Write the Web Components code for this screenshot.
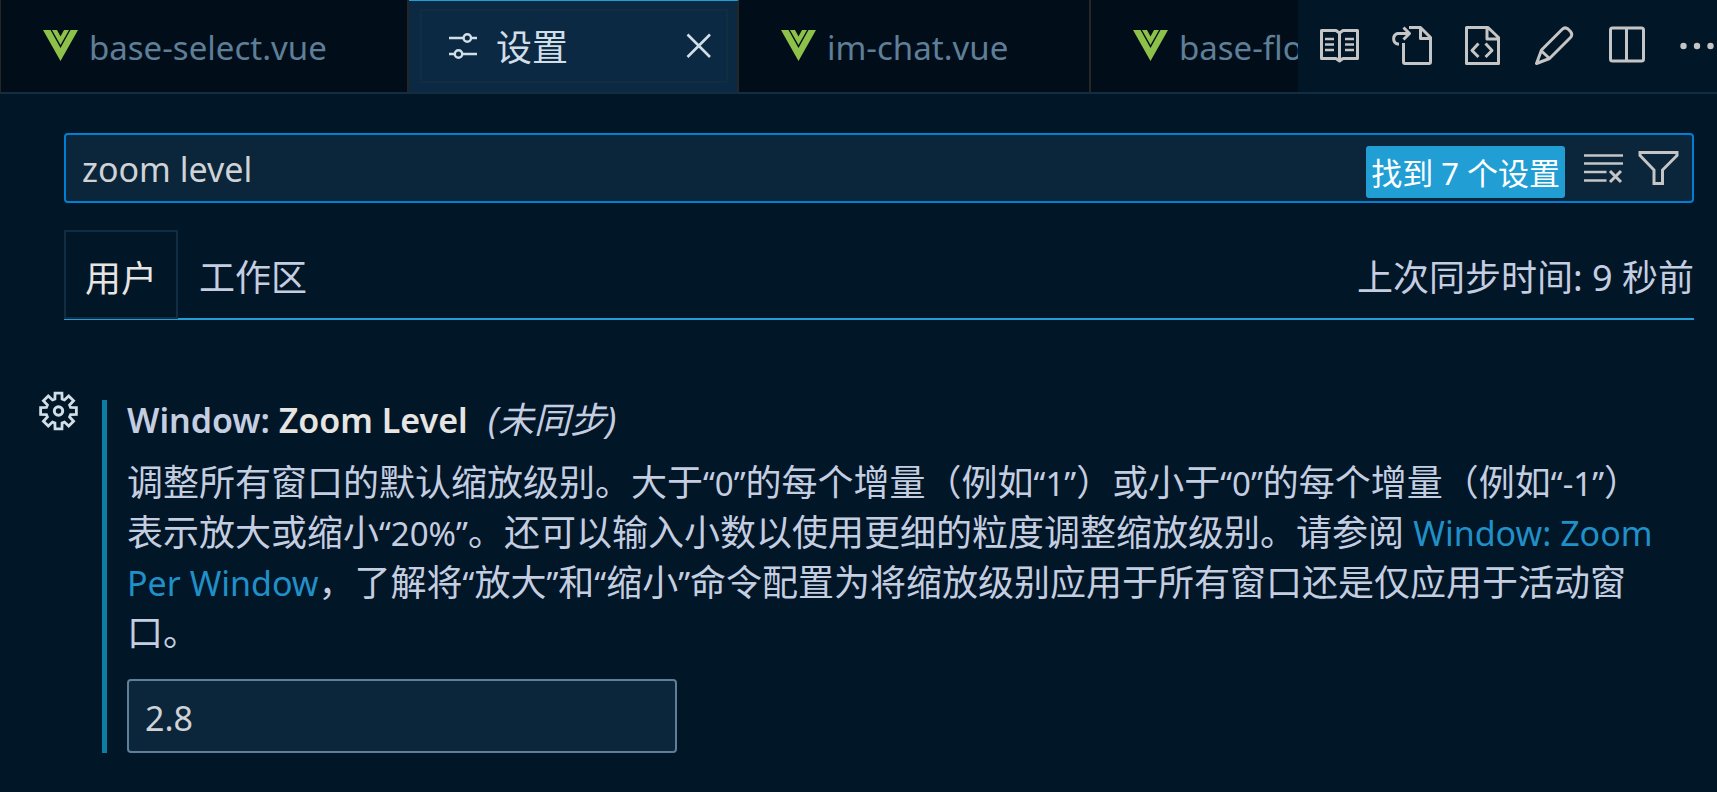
<!DOCTYPE html>
<html lang="zh-CN">
<head>
<meta charset="utf-8">
<title>设置</title>
<style>
  html { background: #011627; }
  body {
    margin: 0;
    background: #011627;
    color: #c5cee0;
    font-family: "Noto Sans", "Noto Sans CJK SC", sans-serif;
    font-size: 36px;
    --border: #122d42;
    --accent: #219fd5;
    --field: #0b253a;
    --size-latin: 34px;
    --size-cjk: 36px;
  }
</style>
</head>
<body>
<settings-window></settings-window>

<template id="t-icon">
  <style>
    :host { display: block; flex: none; width: 44px; height: 44px; }
    svg { display: block; width: 100%; height: 100%; overflow: visible; fill: none; stroke: currentColor; stroke-width: 3; stroke-linejoin: round; }
  </style>
</template>

<template id="t-tab">
  <style>
    :host { display: block; flex: none; box-sizing: border-box; width: 352px; height: 92px; border-right: 2px solid #262626; background: #010e1a; color: #5f7e97; }
    :host([first]) { width: 409px; border-left: 1px solid #262626; }
    :host([active]) { width: 330px; background: #0b2942; color: #d2dee7; border-top: 1px solid var(--accent); padding: 8px 9px 9px 11px; }
    .inner { display: flex; align-items: center; box-sizing: border-box; height: 100%; padding-left: 42px; }
    :host([active]) .inner { border: 2px solid var(--border); padding: 0 5px 0 26px; }
    button { all: unset; display: flex; align-items: center; flex: 1; gap: 10px; white-space: nowrap; font-size: 33px; line-height: 48px; padding-top: 4px; }
    :host([active]) button { font-size: var(--size-cjk); gap: 8px; padding-top: 0; }
    :host([active]) button span { padding-top: 4px; }
    :host([active]) .close { flex: none; display: block; }
    ui-icon.file { width: 36px; height: 36px; }
    :host([active]) ui-icon.file { width: 40px; height: 36px; }
  </style>
  <div class="inner"><button role="tab"><ui-icon class="file"></ui-icon><span><slot></slot></span></button></div>
</template>

<template id="t-tabbar">
  <style>
    :host { display: flex; border-bottom: 2px solid var(--border); height: 92px; }
    .tabs { display: flex; flex: 1; min-width: 0; overflow: hidden; }
    .actions { display: flex; flex: none; gap: 27px; padding: 24px 0 24px 20px; color: #c5c5c5; background: #011627; }
    button { all: unset; display: block; }
  </style>
  <div class="tabs" role="tablist">
    <file-tab icon="vue" first>base-select.vue</file-tab>
    <file-tab icon="sliders" active>设置</file-tab>
    <file-tab icon="vue">im-chat.vue</file-tab>
    <file-tab icon="vue">base-float.vue</file-tab>
  </div>
  <div class="actions">
    <button aria-label="预览"><ui-icon name="book"></ui-icon></button>
    <button aria-label="转到文件"><ui-icon name="goto"></ui-icon></button>
    <button aria-label="打开设置(json)"><ui-icon name="code"></ui-icon></button>
    <button aria-label="编辑"><ui-icon name="pencil"></ui-icon></button>
    <button aria-label="拆分编辑器"><ui-icon name="split"></ui-icon></button>
    <button aria-label="更多操作"><ui-icon name="dots"></ui-icon></button>
  </div>
</template>

<template id="t-search">
  <style>
    :host { display: flex; align-items: center; box-sizing: border-box; height: 70px; border: 2px solid #007fd4; border-radius: 4px; background: var(--field); padding: 0 12px 0 16px; }
    input { all: unset; flex: 1; min-width: 0; font-size: var(--size-latin); line-height: 48px; padding-top: 2px; color: #cfd3d7; }
    .count { box-sizing: border-box; height: 52px; margin: 8px 17px 0 0; padding: 2px 5px 0; text-align: center; border-radius: 3px; background: var(--accent); color: #fff; font-size: 31px; line-height: 50px; white-space: nowrap; }
    .tools { display: flex; gap: 10px; color: #c5c5c5; }
    button { all: unset; display: block; }
  </style>
  <input type="text" aria-label="搜索设置" value="zoom level">
  <div class="count">找到 7 个设置</div>
  <div class="tools">
    <button aria-label="清除设置搜索输入"><ui-icon name="clear"></ui-icon></button>
    <button aria-label="筛选设置"><ui-icon name="filter"></ui-icon></button>
  </div>
</template>

<template id="t-scope">
  <style>
    :host { display: flex; align-items: flex-end; justify-content: space-between; height: 88px; border-bottom: 2px solid var(--accent); }
    .tabs { display: flex; }
    button { all: unset; box-sizing: border-box; height: 88px; padding: 8px 19px 0; border: 2px solid transparent; font-size: var(--size-cjk); line-height: 76px; }
    button[aria-selected=true] { height: 89px; margin-bottom: -1px; border-color: var(--border); color: #e7e5e2; }
    .sync { line-height: 80px; font-size: var(--size-cjk); }
  </style>
  <div class="tabs" role="tablist">
    <button role="tab" aria-selected="true">用户</button>
    <button role="tab" aria-selected="false">工作区</button>
  </div>
  <div class="sync">上次同步时间: 9 秒前</div>
</template>

<template id="t-setting">
  <style>
    :host { display: flex; align-items: flex-start; }
    .gear { all: unset; flex: none; margin: -11px 21px 0 0; color: #d2dee7; }
    .body { flex: 1; min-width: 0; border-left: 5px solid #0c7ea3; padding: 0 57px 0 20px; }
    .title { display: flex; align-items: baseline; gap: 20px; margin: 0; font-weight: 400; line-height: 40px; height: 58px; font-size: var(--size-cjk); }
    .title label { font-size: var(--size-latin); font-weight: 600; line-height: 40px; }
    .title b { font-weight: 600; color: #e7e5e2; }
    p { margin: 0; line-height: 50px; font-size: var(--size-cjk); }
    .lit { font-size: 33px; line-height: 40px; }
    a { font-size: var(--size-latin); line-height: 40px; color: #2090c8; text-decoration: none; }
    input { all: unset; display: block; box-sizing: border-box; width: 550px; max-width: 100%; height: 74px; margin-top: 21px; padding: 4px 16px 0; border: 2px solid #5f7e97; border-radius: 4px; background: var(--field); color: #cfd3d7; font-size: var(--size-latin); line-height: 48px; }
  </style>
  <button class="gear" aria-label="更多操作"><ui-icon name="gear"></ui-icon></button>
  <div class="body">
    <h3 class="title"><label for="level">Window: <b>Zoom Level</b></label><i>(未同步)</i></h3>
    <p>调整所有窗口的默认缩放级别。大于<span class="lit">“0”</span>的每个增量（例如<span class="lit">“1”</span>）或小于<span class="lit">“0”</span>的每个增量（例如<span class="lit">“-1”</span>）表示放大或缩小<span class="lit">“20%”</span>。还可以输入小数以使用更细的粒度调整缩放级别。请参阅 <a href="#window.zoomPerWindow">Window: Zoom Per Window</a>，了解将<span class="lit">“</span>放大<span class="lit">”</span>和<span class="lit">“</span>缩小<span class="lit">”</span>命令配置为将缩放级别应用于所有窗口还是仅应用于活动窗口。</p>
    <input id="level" type="text" inputmode="decimal" value="2.8">
  </div>
</template>

<template id="t-window">
  <style>
    :host { display: block; }
    header { display: flex; flex-direction: column; gap: 27px; padding: 39px 23px 0 64px; }
    main { padding: 80px 0 0 37px; }
  </style>
  <tab-bar></tab-bar>
  <header>
    <search-box></search-box>
    <scope-tabs></scope-tabs>
  </header>
  <main><setting-item></setting-item></main>
</template>

<script>
  // Outline of an eight-toothed cog centred in a 44px box.
  const cog = (() => {
    const pts = [];
    for (let i = 0; i < 8; i++) {
      const a = i * Math.PI / 4;
      for (const [r, d] of [[12.6, -0.29], [18.2, -0.19], [18.2, 0.19], [12.6, 0.29]]) {
        pts.push((21.5 + r * Math.sin(a + d)).toFixed(2) + ' ' + (22 - r * Math.cos(a + d)).toFixed(2));
      }
    }
    return 'M' + pts.join('L') + 'Z';
  })();

  const ICONS = {
    vue: ['0 1 36 36', '<g fill="#8dc149" stroke="none"><path d="M0 1H7.500L17.500 19L27.500 1H35L17.500 32Z"/><path d="M9 1H14L17.500 7.500L21 1H26L17.500 16Z"/></g>'],
    sliders: ['0 0 40 36', '<g stroke-width="2.4"><path d="M1 10H15.5M23 10H29M1 26H7M14.500 26H29"/><circle cx="19.300" cy="10" r="3.700"/><circle cx="10.500" cy="26" r="3.700"/></g>'],
    close: ['0 0 44 44', '<path stroke-width="2.600" d="M10.500 10.500L33 33M33 10.500L10.500 33"/>'],
    book: ['-1 0 44 44', '<path d="M2.500 6.500H17L20.500 9L24 6.500H38.500V34.500H24L20.500 37L17 34.500H2.500ZM20.500 9V36"/><path stroke-width="2.500" d="M6 15H15M6 20.500H15M6 26H15M26 15H35M26 20.500H35M26 26H35"/>'],
    goto: ['0 0 44 44', '<path d="M20 3.500H31.500L41.500 13.500V38Q41.500 39.500 40 39.500H16Q14.500 39.500 14.500 38V19M31.500 4V14.500H41"/><path d="M10 20H8.500A5.500 5.500 0 0 1 8.500 9.500H20M14.500 3.500L20.500 9.500L14.500 15.500"/>'],
    code: ['-1 0 44 44', '<path d="M5.500 3.500H27L37.500 13.500V39.500H5.500ZM26 4V15H37"/><path d="M17.500 19.500L11 26.500L17.500 33M24.500 19.500L31 26.500L24.500 33"/>'],
    pencil: ['-1 0 44 44', '<path d="M30 5.500Q33 2.500 36 5L38.500 7.500Q41 10.500 38.500 13.500L17.500 34.500L4.500 39.500L9.500 26ZM9.500 27L17.500 34.500"/>'],
    split: ['-1 0 44 44', '<rect x="7.500" y="4" width="33" height="33" rx="2"/><path d="M23.500 4V37"/>'],
    dots: ['-1 0 44 44', '<g fill="currentColor" stroke="none"><circle cx="9.500" cy="22" r="3.200"/><circle cx="23" cy="22" r="3.200"/><circle cx="36.500" cy="22" r="3.200"/></g>'],
    clear: ['0 0 44 44', '<path stroke-width="2.700" d="M2 9.500H41M2 17.500H41M2 26H24.500M2 34.500H24.500"/><path d="M28 25L39 36M39 25L28 36"/>'],
    filter: ['0 0 44 44', '<path stroke-linejoin="miter" d="M4 6.500H41V9.500L26.500 24V37.500H18V24L4 9.500Z"/>'],
    gear: ['0 0 44 44', `<path stroke-width="2.800" stroke-linejoin="miter" d="${cog}"/><circle cx="21.500" cy="22" r="4.200"/>`]
  };

  class Base extends HTMLElement {
    constructor() {
      super();
      const t = document.getElementById(this.constructor.template);
      this.attachShadow({ mode: 'open' }).append(t.content.cloneNode(true));
    }
  }

  class UiIcon extends Base {
    static template = 't-icon';
    static observedAttributes = ['name'];
    attributeChangedCallback(_, __, name) {
      const [box, shapes] = ICONS[name];
      this.shadowRoot.querySelector('svg')?.remove();
      this.shadowRoot.querySelector('style').insertAdjacentHTML('afterend',
        `<svg viewBox="${box}" aria-hidden="true">${shapes}</svg>`);
    }
  }

  class FileTab extends Base {
    static template = 't-tab';
    connectedCallback() {
      const root = this.shadowRoot;
      root.querySelector('.file').setAttribute('name', this.getAttribute('icon'));
      const active = this.hasAttribute('active');
      root.querySelector('button').setAttribute('aria-selected', active);
      if (active && !root.querySelector('.close')) {
        const close = document.createElement('button');
        close.className = 'close';
        close.setAttribute('aria-label', '关闭');
        close.innerHTML = '<ui-icon name="close"></ui-icon>';
        root.querySelector('.inner').append(close);
      }
    }
  }

  class TabBar extends Base { static template = 't-tabbar'; }
  class SearchBox extends Base { static template = 't-search'; }
  class ScopeTabs extends Base { static template = 't-scope'; }
  class SettingItem extends Base { static template = 't-setting'; }
  class SettingsWindow extends Base { static template = 't-window'; }

  customElements.define('ui-icon', UiIcon);
  customElements.define('file-tab', FileTab);
  customElements.define('tab-bar', TabBar);
  customElements.define('search-box', SearchBox);
  customElements.define('scope-tabs', ScopeTabs);
  customElements.define('setting-item', SettingItem);
  customElements.define('settings-window', SettingsWindow);
</script>
</body>
</html>
